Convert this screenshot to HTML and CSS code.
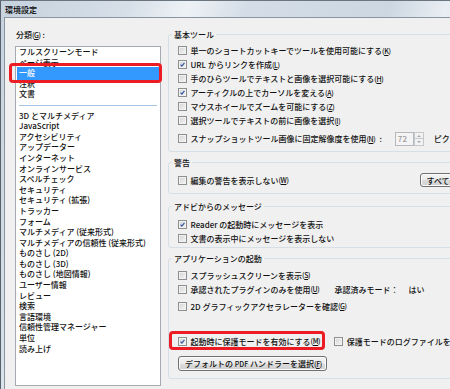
FILE: index.html
```html
<!DOCTYPE html>
<html lang="ja">
<head>
    <meta charset="UTF-8">
    <title>環境設定</title>
    <link rel="stylesheet" href="styles.css">
</head>
<body>
    <div class="window">
        <div class="titlebar">環境設定</div>
        <div class="frame">
            <div class="client">
                <div class="categories">
                    <div class="cat-label">分類<span class="mn">(<u>G</u>)</span> :</div>
                    <ul class="cat-list">
                        <li>フルスクリーンモード</li>
                        <li>ページ表示</li>
                        <li class="selected">一般</li>
                        <li>注釈</li>
                        <li>文書</li>
                        <li class="sep"></li>
                        <li>3D とマルチメディア</li>
                        <li>JavaScript</li>
                        <li>アクセシビリティ</li>
                        <li>アップデーター</li>
                        <li>インターネット</li>
                        <li>オンラインサービス</li>
                        <li>スペルチェック</li>
                        <li>セキュリティ</li>
                        <li>セキュリティ (拡張)</li>
                        <li>トラッカー</li>
                        <li>フォーム</li>
                        <li>マルチメディア (従来形式)</li>
                        <li>マルチメディアの信頼性 (従来形式)</li>
                        <li>ものさし (2D)</li>
                        <li>ものさし (3D)</li>
                        <li>ものさし (地図情報)</li>
                        <li>ユーザー情報</li>
                        <li>レビュー</li>
                        <li>検索</li>
                        <li>言語環境</li>
                        <li>信頼性管理マネージャー</li>
                        <li>単位</li>
                        <li>読み上げ</li>
                    </ul>
                </div>

                <div class="panel">
                    <fieldset class="group g-basic">
                        <legend>基本ツール</legend>
                        <label class="check"><span class="box"></span>単一のショートカットキーでツールを使用可能にする<span class="mn">(<u>K</u>)</span></label>
                        <label class="check"><span class="box"><svg viewBox="0 0 9 9"><path d="M2 4.6 3.7 6.5 7 2.3"/></svg></span>URL からリンクを作成<span class="mn">(<u>L</u>)</span></label>
                        <label class="check"><span class="box"></span>手のひらツールでテキストと画像を選択可能にする<span class="mn">(<u>H</u>)</span></label>
                        <label class="check"><span class="box"><svg viewBox="0 0 9 9"><path d="M2 4.6 3.7 6.5 7 2.3"/></svg></span>アーティクルの上でカーソルを変える<span class="mn">(<u>A</u>)</span></label>
                        <label class="check"><span class="box"></span>マウスホイールでズームを可能にする<span class="mn">(<u>Z</u>)</span></label>
                        <label class="check"><span class="box"></span>選択ツールでテキストの前に画像を選択<span class="mn">(<u>I</u>)</span></label>
                        <div class="check snap">
                            <span class="box"></span>スナップショットツール画像に固定解像度を使用<span class="mn">(<u>N</u>)</span><span class="colon">:</span>
                            <span class="spin">
                                <span class="spin-field">72</span>
                                <span class="spin-btns"><span class="up"></span><span class="down"></span></span>
                            </span>
                            <span class="unit">ピクセル</span>
                        </div>
                    </fieldset>

                    <fieldset class="group g-warn">
                        <legend>警告</legend>
                        <div class="check warn-row">
                            <span class="box"></span>編集の警告を表示しない<span class="mn">(<u>W</u>)</span>
                            <button class="btn reset">すべての警告をリセット<span class="mn">(<u>R</u>)</span></button>
                        </div>
                    </fieldset>

                    <fieldset class="group g-msg">
                        <legend>アドビからのメッセージ</legend>
                        <label class="check"><span class="box"><svg viewBox="0 0 9 9"><path d="M2 4.6 3.7 6.5 7 2.3"/></svg></span>Reader の起動時にメッセージを表示</label>
                        <label class="check"><span class="box"></span>文書の表示中にメッセージを表示しない</label>
                    </fieldset>

                    <fieldset class="group g-start">
                        <legend>アプリケーションの起動</legend>
                        <label class="check"><span class="box"></span>スプラッシュスクリーンを表示<span class="mn">(<u>S</u>)</span></label>
                        <div class="check">
                            <span class="box"></span>承認されたプラグインのみを使用<span class="mn">(<u>U</u>)</span>
                            <span class="mode">承認済みモード：</span><span class="mode-val">はい</span>
                        </div>
                        <label class="check accel"><span class="box"></span>2D グラフィックアクセラレーターを確認<span class="mn">(<u>G</u>)</span></label>
                        <div class="check protect-row">
                            <label class="check hl"><span class="box"><svg viewBox="0 0 9 9"><path d="M2 4.6 3.7 6.5 7 2.3"/></svg></span>起動時に保護モードを有効にする<span class="mn">(<u>M</u>)</span></label>
                            <label class="check log"><span class="box"></span>保護モードのログファイルを作成<span class="mn">(<u>P</u>)</span></label>
                        </div>
                        <div class="btn-row">
                            <button class="btn handler">デフォルトの <span class="small">PDF</span> ハンドラーを選択<span class="mn">(<u>F</u>)</span></button>
                        </div>
                    </fieldset>
                </div>
            </div>
        </div>
    </div>
</body>
</html>
```

FILE: styles.css
```css
body {
    margin: 0;
    font-family: "Noto Sans CJK JP", "Noto Sans", sans-serif;
    font-size: 8px;
    font-weight: 500;
    color: #111;
}
u {
    text-decoration: underline;
    text-underline-offset: 1px;
}
.mn {
    font-size: 7px;
    letter-spacing: -0.4px;
}
.small {
    font-size: 7px;
}
.window {
    width: 450px;
    height: 389px;
    box-sizing: border-box;
    overflow: hidden;
    display: flex;
    flex-direction: column;
    border-top: 1px solid #6a7580;
    border-left: 1px solid #56616c;
    background: linear-gradient(110deg, #c6d2de 0%, #d6dfe8 22%, #eef2f6 32%, #d4dde7 42%, #ccd7e2 66%, #e9eef3 76%, #d2dbe5 88%, #c9d4df 100%);
}
.titlebar {
    height: 16px;
    flex: none;
    line-height: 17px;
    padding-left: 4px;
    color: #000;
    overflow: hidden;
}
.frame {
    flex: 1;
    display: flex;
    padding-left: 3px;
    min-height: 0;
}
.client {
    flex: 1;
    display: flex;
    min-width: 0;
    background: #f0f0f0;
    border-left: 1px solid #8a95a1;
    border-top: 1px solid #8a95a1;
    padding: 11px 0 0 10px;
}

/* categories */
.categories {
    width: 146px;
    flex: none;
    display: flex;
    flex-direction: column;
}
.cat-label {
    line-height: 11px;
    margin-bottom: 5px;
    padding-left: 1px;
}
.cat-list {
    flex: 1;
    margin: 0 0 3px;
    padding: 0;
    list-style: none;
    background: #fff;
    border: 1px solid #a5aab0;
}
.cat-list li {
    height: 10.6px;
    line-height: 10.6px;
    margin: 0 1px;
    padding-left: 2px;
    white-space: nowrap;
}
.cat-list .selected {
    position: relative;
    background: #3399ff;
    color: #fff;
    box-shadow: 0 -1px 0 #3399ff, 0 1px 0 #3399ff;
}
.cat-list .selected::after {
    content: "";
    position: absolute;
    left: -8px;
    right: -3px;
    top: -5px;
    bottom: -4px;
    border: 3.5px solid #ec1c24;
    border-radius: 4px;
}
.cat-list .sep {
    margin: 0 3px;
    background: linear-gradient(transparent 4.8px, #a9c6e8 4.8px, #a9c6e8 6px, transparent 6px);
}

/* right panel */
.panel {
    width: 366px;
    flex: none;
    margin-left: 6.5px;
    display: flex;
    flex-direction: column;
    gap: 5px;
}
.group {
    margin: 0;
    min-width: 0;
    border: 1px solid #d5dfe5;
    border-radius: 3px;
    padding: 3.5px 0 2.5px 9.5px;
}
.group legend {
    padding: 0 2px;
    margin-left: -6px;
    line-height: 11px;
}
.g-warn {
    padding-top: 4px;
    padding-bottom: 5px;
}
.g-msg {
    margin-top: 2px;
    padding-top: 5px;
    padding-bottom: 2px;
}
.g-start {
    padding-top: 4px;
    padding-bottom: 7px;
}
.check {
    display: flex;
    align-items: center;
    height: 14px;
    white-space: nowrap;
}
.box {
    width: 9px;
    height: 9px;
    flex: none;
    margin-right: 3.5px;
    box-sizing: border-box;
    border: 1px solid #8e8f8f;
    background: linear-gradient(135deg, #d2d2d2, #f7f7f7);
    box-shadow: inset 0 0 0 1px #f2f2f2;
}
.box svg {
    display: block;
    width: 7px;
    height: 7px;
    fill: none;
    stroke: #2a4f9f;
    stroke-width: 1.4;
}
.snap {
    height: 20px;
    margin-top: 1px;
}
.colon {
    margin-left: 4px;
}
.spin {
    display: flex;
    height: 14px;
    margin-left: 13px;
}
.spin-field {
    width: 19px;
    box-sizing: border-box;
    border: 1px solid #b5b9bd;
    background: #f4f4f4;
    color: #9c9c9c;
    padding-left: 2px;
    line-height: 12px;
}
.spin-btns {
    width: 10px;
    display: flex;
    flex-direction: column;
}
.spin-btns span {
    flex: 1;
    border: 1px solid #c6c9cc;
    background: #f2f2f2;
    position: relative;
}
.spin-btns .up {
    border-bottom: none;
}
.spin-btns span::after {
    content: "";
    position: absolute;
    left: 2px;
    top: 2px;
    border-left: 2px solid transparent;
    border-right: 2px solid transparent;
}
.spin-btns .up::after {
    border-bottom: 2px solid #a8a8a8;
}
.spin-btns .down::after {
    border-top: 2px solid #a8a8a8;
}
.unit {
    margin-left: 10px;
}
.btn {
    font: inherit;
    color: #111;
    height: 14px;
    padding: 0 6px;
    border: 1px solid #707070;
    border-radius: 3px;
    background: linear-gradient(#f3f3f3 0%, #ebebeb 50%, #dcdcdc 50%, #d0d0d0 100%);
    box-shadow: inset 0 0 0 1px #fbfbfb;
    white-space: nowrap;
}
.warn-row {
    height: 16px;
}
.reset {
    margin-left: auto;
    width: 113px;
    text-align: left;
}
.mode {
    margin-left: 15px;
}
.mode-val {
    margin-left: 10px;
}
.accel {
    margin-top: 3px;
}
.protect-row {
    height: 18px;
    margin-top: 19px;
}
.hl {
    position: relative;
}
.hl::after {
    content: "";
    position: absolute;
    left: -9px;
    right: -5px;
    top: -3px;
    bottom: -2px;
    border: 3.5px solid #ec1c24;
    border-radius: 4px;
}
.log {
    margin-left: 14px;
}
.btn-row {
    display: flex;
    margin-top: 6px;
}
.handler {
    width: 149px;
    height: 15px;
}
```
